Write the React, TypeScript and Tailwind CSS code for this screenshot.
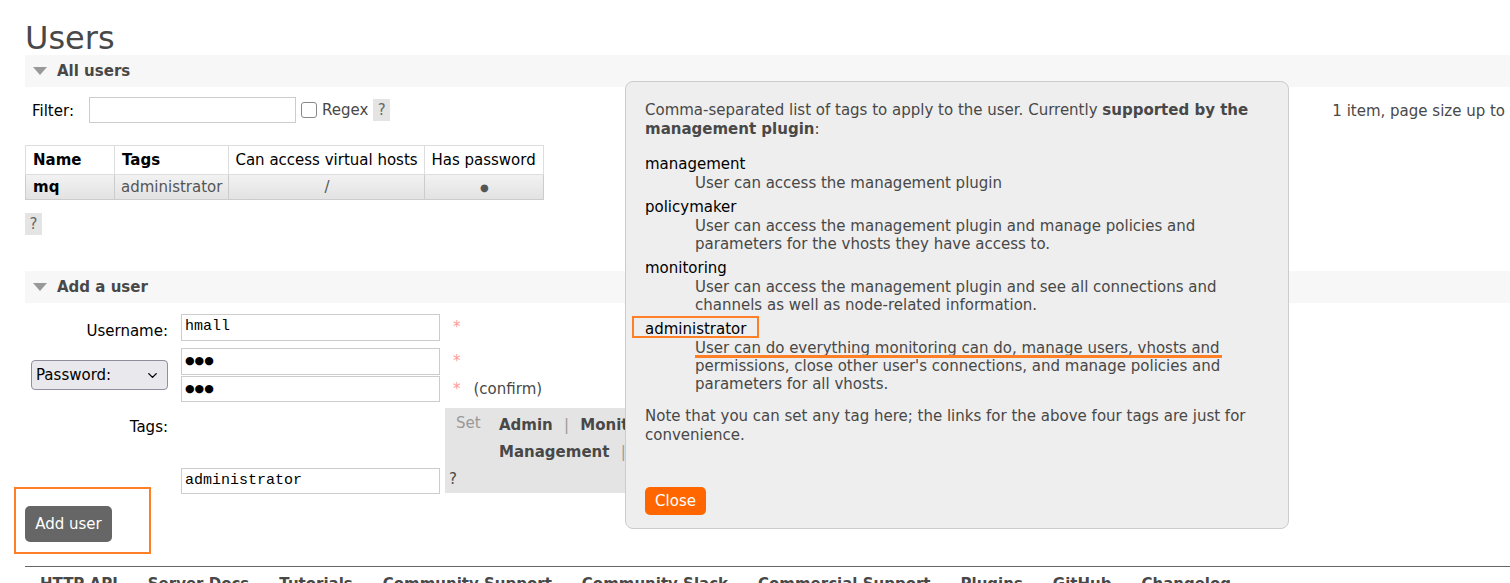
import { ChevronDown } from 'lucide-react';

const tagHelp = [
  { name: 'management', desc: ['User can access the management plugin'] },
  {
    name: 'policymaker',
    desc: ['User can access the management plugin and manage policies and', 'parameters for the vhosts they have access to.'],
  },
  {
    name: 'monitoring',
    desc: ['User can access the management plugin and see all connections and', 'channels as well as node-related information.'],
  },
  {
    name: 'administrator',
    desc: [
      'User can do everything monitoring can do, manage users, vhosts and',
      "permissions, close other user's connections, and manage policies and",
      'parameters for all vhosts.',
    ],
  },
];

const footerLinks = [
  'HTTP API',
  'Server Docs',
  'Tutorials',
  'Community Support',
  'Community Slack',
  'Commercial Support',
  'Plugins',
  'GitHub',
  'Changelog',
];

function SectionBar({ title }: { title: string }) {
  return (
    <div className="flex h-[32px] items-center bg-[#f7f7f7] pl-[8px]">
      <span className="h-0 w-0 border-x-[7px] border-t-[8px] border-x-transparent border-t-[#999]" />
      <span className="ml-[10px] font-bold">{title}</span>
    </div>
  );
}

function Help({ className = '' }: { className?: string }) {
  return (
    <span className={`flex h-[22px] w-[17px] shrink-0 items-center justify-center bg-[#e4e4e4] text-[15px] text-[#666] ${className}`}>
      ?
    </span>
  );
}

function Req() {
  return <span className="ml-[13px] self-start pt-[2px] text-[#f99]">*</span>;
}

export default function App() {
  return (
    <div className="relative h-[583px] w-[1510px] overflow-hidden bg-white font-['DejaVu_Sans',Verdana,sans-serif] text-[15px] text-[#484848]">
      <div className="pl-[25px]">
        {/* Title */}
        <h1 className="h-[55px] pt-[20px] text-[32px] leading-[36px] font-normal">Users</h1>

        <SectionBar title="All users" />

        {/* Filter */}
        <div className="mt-[10px] flex h-[26px] items-center whitespace-nowrap">
          <span className="w-[64px] shrink-0 pl-[7px] pt-[2px] text-black">Filter:</span>
          <span className="h-[26px] w-[207px] shrink-0 border border-[#ccc] bg-white" />
          <span className="ml-[5px] h-[16px] w-[16px] shrink-0 rounded-[3px] border border-[#888] bg-white" />
          <span className="ml-[5px] shrink-0">Regex</span>
          <Help className="ml-[5px]" />
          <span className="ml-[942px] shrink-0 pt-[2px]">1 item, page size up to 100</span>
        </div>

        {/* Users table */}
        <table className="mt-[22px] border-collapse text-black">
          <thead>
            <tr className="h-[29px]">
              <th className="w-[89px] border border-[#ddd] px-[7px] text-left font-bold">Name</th>
              <th className="w-[114px] border border-[#ddd] px-[7px] text-left font-bold">Tags</th>
              <th className="w-[196px] border border-[#ddd] px-[6px] text-left font-normal">Can access virtual hosts</th>
              <th className="w-[119px] border border-[#ddd] px-[6px] text-left font-normal">Has password</th>
            </tr>
          </thead>
          <tbody>
            <tr className="h-[25px] bg-gradient-to-b from-[#f2f2f2] to-[#e2e2e2]">
              <td className="border border-[#ccc] px-[7px] font-bold">mq</td>
              <td className="border border-[#ccc] px-[6px] text-[#555]">administrator</td>
              <td className="border border-[#ccc] text-center text-[#555]">/</td>
              <td className="border border-[#ccc] text-center text-[10px] text-[#555]">●</td>
            </tr>
          </tbody>
        </table>

        <Help className="mt-[13px]" />

        <div className="mt-[36px]">
          <SectionBar title="Add a user" />
        </div>

        {/* Add user form */}
        <div className="mt-[11px] flex h-[27px]">
          <span className="w-[143px] pt-[6px] text-right text-black">Username:</span>
          <span className="ml-[13px] flex h-[27px] w-[259px] items-center border border-[#ccc] px-[3px] font-['Liberation_Mono',monospace] text-black">
            hmall
          </span>
          <Req />
        </div>

        <div className="mt-[7px] flex h-[54px] items-center">
          <div className="ml-[6px] flex h-[30px] w-[137px] items-center justify-between rounded-[4px] border border-[#8f8f9d] bg-[#e9e9ed] pr-[7px] pl-[4px] text-black">
            <span>Password:</span>
            <ChevronDown size={15} strokeWidth={2.2} />
          </div>
          <div className="ml-[13px] flex flex-col gap-[1px]">
            <div className="flex items-center">
              <span className="flex h-[27px] w-[259px] items-center border border-[#ccc] px-[3px] text-[11px] text-black">●●●</span>
              <Req />
            </div>
            <div className="flex items-center">
              <span className="flex h-[26px] w-[259px] items-center border border-[#ccc] px-[3px] text-[11px] text-black">●●●</span>
              <Req />
              <span className="ml-[13px]">(confirm)</span>
            </div>
          </div>
        </div>

        <div className="mt-[6px] flex h-[86px]">
          <span className="w-[143px] pt-[8px] text-right text-black">Tags:</span>
          <div className="ml-[13px] flex w-[259px] flex-col justify-end">
            <span className="flex h-[26px] items-center border border-[#ccc] px-[3px] font-['Liberation_Mono',monospace] text-black">
              administrator
            </span>
          </div>
          <div className="ml-[5px] flex h-[85px] w-[300px] flex-col bg-[#e4e4e4] px-[4px]">
            <div className="flex pt-[4px]">
              <span className="w-[50px] pl-[7px] text-[#999]">Set</span>
              <div className="flex flex-col gap-[4px] pt-[2px] leading-[23px] font-bold text-[#484848]">
                <span>
                  Admin <span className="mx-[6px] font-normal text-[#999]">|</span> Monitoring{' '}
                  <span className="mx-[6px] font-normal text-[#999]">|</span>
                </span>
                <span>
                  Management <span className="mx-[6px] font-normal text-[#999]">|</span> None
                </span>
              </div>
            </div>
            <span className="mt-auto pb-[3px] text-[#484848]">?</span>
          </div>
        </div>

        <button className="mt-[12px] h-[36px] w-[87px] rounded-[5px] bg-[#666] text-white">Add user</button>

        <div className="mt-[24px] h-px bg-[#666]" />

        <div className="flex gap-[30px] pt-[6px] pl-[15px] font-bold whitespace-nowrap text-[#484848]">
          {footerLinks.map((l) => (
            <span key={l}>{l}</span>
          ))}
        </div>
      </div>

      {/* Help popup */}
      <div className="absolute top-[81px] left-[625px] flex h-[448px] w-[664px] flex-col rounded-[8px] border border-[#ccc] bg-[#eeeeee] px-[19px] pt-[19px] text-[#484848]">
        <p className="leading-[19px]">
          Comma-separated list of tags to apply to the user. Currently <b>supported by the management plugin</b>:
        </p>
        <dl className="mt-[16px]">
          {tagHelp.map((t) => (
            <div key={t.name} className="mb-[6px]">
              <dt className="leading-[19px] text-black">{t.name}</dt>
              <dd className="pl-[50px] leading-[18px]">
                {t.desc.map((d) => (
                  <div key={d}>{d}</div>
                ))}
              </dd>
            </div>
          ))}
        </dl>
        <p className="mt-[8px] leading-[19px]">
          Note that you can set any tag here; the links for the above four tags are just for convenience.
        </p>
        <button className="mt-[42px] h-[28px] w-[61px] rounded-[5px] bg-[#ff6600] text-white">Close</button>
      </div>

      {/* Annotations */}
      <div className="absolute top-[316px] left-[632px] h-[22px] w-[127px] border-2 border-[#ff7f27]" />
      <div className="absolute top-[355px] left-[695px] h-[3px] w-[527px] bg-[#ff7f27]" />
      <div className="absolute top-[487px] left-[14px] h-[67px] w-[137px] border-2 border-[#ff7f27]" />
    </div>
  );
}
